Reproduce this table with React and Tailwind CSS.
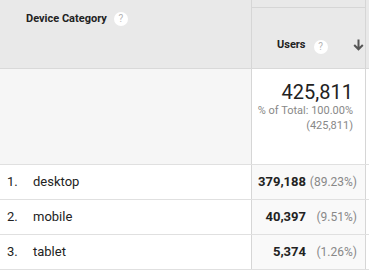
function Help() {
  return (
    <span className="inline-flex h-[14px] w-[14px] items-center justify-center rounded-full bg-white text-[10px] font-normal leading-none text-[#b5b5b5]">
      ?
    </span>
  );
}

const rows = [
  { n: "1.", name: "desktop", users: "379,188", pct: "(89.23%)" },
  { n: "2.", name: "mobile", users: "40,397", pct: "(9.51%)" },
  { n: "3.", name: "tablet", users: "5,374", pct: "(1.26%)" },
];

export default function App() {
  return (
    <div
      className="h-[273px] w-[369px] overflow-hidden bg-white text-[#222]"
      style={{ fontFamily: "Roboto, 'Liberation Sans', sans-serif" }}
    >
      {/* header */}
      <div className="flex h-[69px] border-b border-[#d9d9d9] bg-[#e9e9e9]">
        <div className="w-[252px] border-r border-[#d6d6d6] pl-[26px] pt-[11px]">
          <div className="flex items-center gap-[7px] text-[11px] font-bold">
            <span>Device Category</span>
            <Help />
          </div>
        </div>
        <div className="flex w-[114px] flex-col border-r border-[#d6d6d6]">
          <div className="h-[8px] border-b border-[#d6d6d6]" />
          <div className="flex items-center pl-[25px] pt-[25px]">
            <span className="text-[11px] font-bold">Users</span>
            <span className="ml-[8px]">
              <Help />
            </span>
            <svg className="ml-[25px]" width="11" height="12" viewBox="0 0 11 12">
              <path d="M5.5 0.5v10M1.2 6l4.3 4.3 4.3-4.3" stroke="#555" strokeWidth="2" fill="none" />
            </svg>
          </div>
        </div>
        <div className="flex-1" />
      </div>

      {/* total */}
      <div className="flex h-[96px] border-b border-[#e0e0e0]">
        <div className="w-[252px] border-r border-[#d6d6d6] bg-[#f6f6f6]" />
        <div className="w-[114px] border-r border-[#d6d6d6] bg-white pr-[12px] pt-[11px] text-right">
          <div className="text-[20px] leading-[24px] text-[#222]">425,811</div>
          <div className="text-[11px] leading-[14px] text-[#888]">% of Total: 100.00%</div>
          <div className="text-[11px] leading-[15px] text-[#888]">(425,811)</div>
        </div>
        <div className="flex-1" />
      </div>

      {rows.map((r) => (
        <div key={r.n} className="flex h-[35px] border-b border-[#e0e0e0]">
          <div className="flex w-[252px] items-center border-r border-[#d6d6d6] text-[13px]">
            <span className="w-[33px] pl-[7px]">{r.n}</span>
            <span>{r.name}</span>
          </div>
          <div className="flex w-[114px] items-center justify-end border-r border-[#d6d6d6] bg-[#f9f9f9] pr-[8px] text-[13px]">
            <span className="font-bold">{r.users}</span>
            <span className="w-[51px] text-right text-[12px] text-[#888]">{r.pct}</span>
          </div>
          <div className="flex-1" />
        </div>
      ))}
    </div>
  );
}
